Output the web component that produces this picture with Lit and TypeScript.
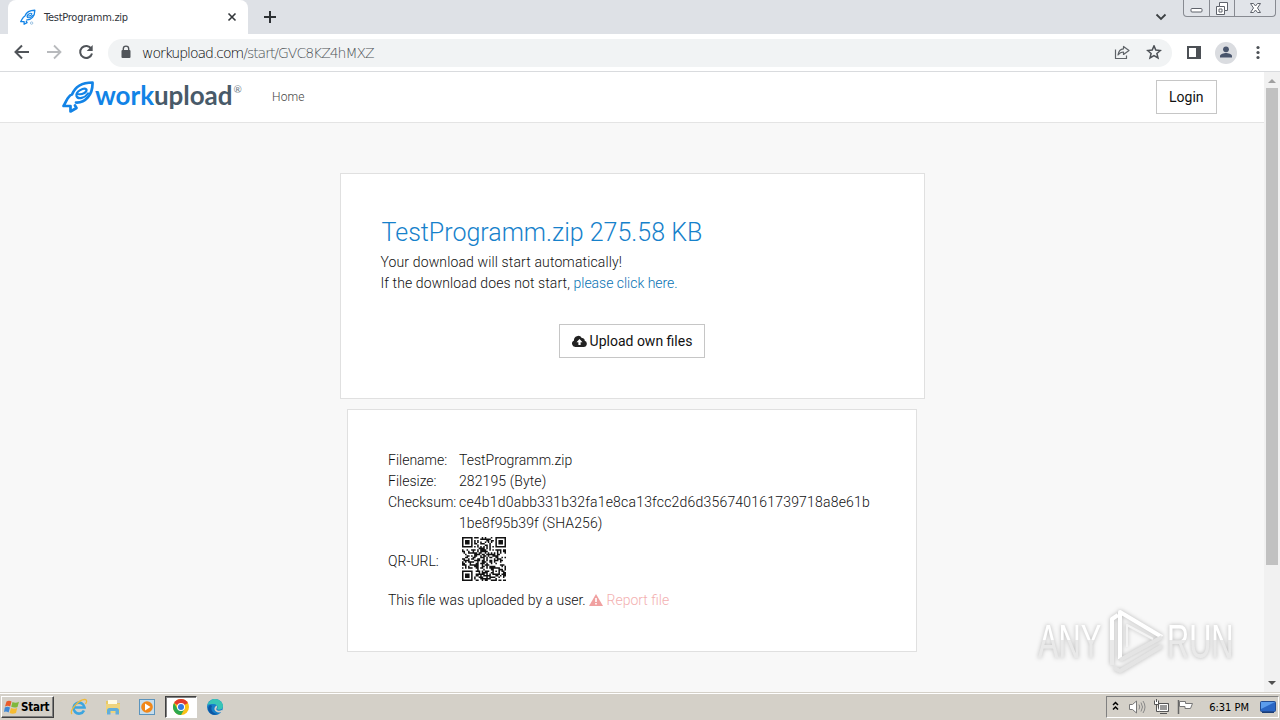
import { LitElement, html, svg, css } from "lit";
import { customElement } from "lit/decorators.js";

const QR_SIZE = 29;

function finder(x: number, y: number): boolean | null {
  const origins = [
    [0, 0],
    [QR_SIZE - 7, 0],
    [0, QR_SIZE - 7],
  ];
  for (const [ox, oy] of origins) {
    const dx = x - ox;
    const dy = y - oy;
    if (dx >= -1 && dx <= 7 && dy >= -1 && dy <= 7) {
      const ring = Math.max(Math.abs(dx - 3), Math.abs(dy - 3));
      return ring !== 2 && ring !== 4;
    }
  }
  return null;
}

function qrPath(): string {
  let d = "";
  let seed = 4211;
  for (let y = 0; y < QR_SIZE; y++) {
    for (let x = 0; x < QR_SIZE; x++) {
      seed = (seed * 1103515245 + 12345) % 2147483648;
      let dark = finder(x, y);
      if (dark === null) {
        const ring = Math.max(Math.abs(x - 22), Math.abs(y - 22));
        if (ring <= 2) dark = ring !== 1;
        else if (x === 6 || y === 6) dark = (x + y) % 2 === 0;
        else dark = seed / 2147483648 < 0.52;
      }
      if (dark) d += `M${x} ${y}h1v1h-1z`;
    }
  }
  return d;
}

const rocket = svg`
  <g fill="none" stroke="#1283e6" stroke-width="2.7" stroke-linejoin="round" stroke-linecap="round">
    <path d="M14 21.500C23 22 31 14 30.500 1.500C20 1.500 13 6 10 13.500C6 14.500 5 19 1.500 25H8.500V30.500L14.500 27L13 24.500"/>
    <path d="M16 13C20 14 25 11.500 24.500 8.500C22 6 13.500 10.500 14.500 15C16 19 23 17 26 12.500" stroke-width="2.200"/>
  </g>`;

@customElement("browser-chrome")
export class BrowserChrome extends LitElement {
  static override styles = css`
    :host {
      display: block;
      font-family: "DejaVu Sans Condensed", "DejaVu Sans", sans-serif;
      font-stretch: condensed;
      color: #3c4043;
    }
    svg {
      display: block;
      flex: none;
    }
    .tabs {
      height: 34px;
      background: #dee1e6;
      display: flex;
    }
    .tab {
      width: 240px;
      height: 34px;
      margin-left: 8px;
      padding: 0 10px 0 12px;
      box-sizing: border-box;
      border-radius: 8px 8px 0 0;
      background: #fff;
      display: flex;
      align-items: center;
    }
    .title {
      margin-left: 8px;
      flex: 1;
      font-size: 11px;
      letter-spacing: -0.26px;
      color: #30343a;
      white-space: nowrap;
    }
    .new {
      margin: 10px 0 0 15px;
    }
    .chevron {
      margin: 13px 16px 0 auto;
    }
    .window {
      width: 91px;
      height: 16px;
      border: 1px solid #878a91;
      border-top: 0;
      border-radius: 0 0 4px 4px;
      display: grid;
      grid-template-columns: 25px 25px 1fr;
      margin-right: 4px;
      background: #e1e4e9;
    }
    .window div {
      display: flex;
      align-items: center;
      justify-content: center;
    }
    .window div + div {
      border-left: 1px solid #878a91;
    }
    .toolbar {
      height: 37px;
      background: #fff;
      border-bottom: 1px solid #d9dbde;
      display: flex;
      align-items: center;
      padding: 0 14px 0 14px;
    }
    .nav {
      display: flex;
      gap: 16px;
      margin-top: -1px;
    }
    .address {
      flex: 1;
      height: 28px;
      margin: 0 14px 0 14px;
      padding: 0 10px 0 10px;
      border-radius: 14px;
      background: #f1f3f4;
      display: flex;
      align-items: center;
    }
    .url {
      flex: 1;
      margin-left: 8px;
      font-family: "DejaVu Sans", sans-serif;
      font-stretch: normal;
      font-size: 14px;
      font-weight: 200;
      white-space: nowrap;
      letter-spacing: -1.03px;
      color: #4f5358;
    }
    .host {
      color: #000;
      letter-spacing: -1.02px;
    }
    .tools {
      display: flex;
      gap: 16px;
    }
    .right {
      display: flex;
      align-items: center;
      gap: 13px;
    }
  `;

  override render() {
    return html`<div class="tabs">
        <div class="tab">
          <svg width="16" height="17" viewBox="0 0 33 33">${rocket}
            <circle cx="24" cy="28" r="2.500" fill="none" stroke="#79aed8" stroke-width="1.500" />
          </svg>
          <span class="title">TestProgramm.zip</span>
          <svg width="12" height="12" viewBox="0 0 12 12">
            <path d="M2.500 2.500l7 7M9.500 2.500l-7 7" stroke="#33373b" stroke-width="1.600" />
          </svg>
        </div>
        <svg class="new" width="14" height="14" viewBox="0 0 14 14">
          <path d="M7 1v12M1 7h12" stroke="#2d3034" stroke-width="2" />
        </svg>
        <svg class="chevron" width="12" height="8" viewBox="0 0 12 8">
          <path d="M1.500 1.500L6 6l4.500-4.500" fill="none" stroke="#3c4043" stroke-width="1.800" />
        </svg>
        <div class="window">
          <div>
            <svg width="13" height="16" viewBox="0 0 13 16">
              <rect x="1" y="8.500" width="11" height="3.500" rx="1" fill="#fff" stroke="#5e626b" />
            </svg>
          </div>
          <div>
            <svg width="14" height="16" viewBox="0 0 14 16">
              <path d="M4.500 2.500h8v8h-3v4h-8v-8h3z" fill="#fff" stroke="#5e626b" />
              <path d="M4.500 6.500h5v4M4 9h3v3H4z" fill="none" stroke="#5e626b" />
            </svg>
          </div>
          <div>
            <svg width="13" height="16" viewBox="0 0 13 16">
              <path
                d="M1.500 3.500h3L6.500 6l2-2.500h3L8.500 8l3 4.500h-3L6.500 10l-2 2.500h-3l3-4.500z"
                fill="#fff"
                stroke="#5e626b"
              />
            </svg>
          </div>
        </div>
      </div>
      <div class="toolbar">
        <div class="nav">
          <svg width="16" height="16" viewBox="0 0 16 16">
            <path d="M15 8H2M8 1.500L1.500 8L8 14.500" fill="none" stroke="#505459" stroke-width="2" />
          </svg>
          <svg width="16" height="16" viewBox="0 0 16 16">
            <path d="M1 8h13M8 1.500L14.500 8L8 14.500" fill="none" stroke="#b8babd" stroke-width="1.800" />
          </svg>
          <svg width="16" height="16" viewBox="0 0 16 16">
            <path d="M13.300 4.800A6 6 0 1 0 14 9.500" fill="none" stroke="#505459" stroke-width="2" />
            <path d="M14.700 1v6H8.700z" fill="#505459" />
          </svg>
        </div>
        <div class="address">
          <svg width="16" height="16" viewBox="0 0 16 16">
            <rect x="3.500" y="5" width="9" height="8" rx="1" fill="#505459" />
            <path d="M5.300 5V3.800a2.700 2.700 0 0 1 5.400 0V5" fill="none" stroke="#505459" stroke-width="1.400" />
          </svg>
          <span class="url"><span class="host">workupload.com</span>/start/GVC8KZ4hMXZ</span>
          <div class="tools">
            <svg width="16" height="16" viewBox="0 0 16 16">
              <path
                d="M1.500 4.500v9h11v-3M9.500 1.500v2.300C6 4 4.500 6.500 4 10c1.500-2 3-3 5.500-3v2.500L15 5.500z"
                fill="none"
                stroke="#5f6368"
                stroke-width="1.200"
                stroke-linejoin="round"
              />
            </svg>
            <svg width="16" height="16" viewBox="0 0 16 16">
              <path
                d="M8 .9l1.800 4.200 4.600.4-3.500 3 1.100 4.500L8 10.600l-4 2.400 1.100-4.500-3.500-3 4.600-.4z"
                fill="none"
                stroke="#4c5055"
                stroke-width="1.500"
              />
            </svg>
          </div>
        </div>
        <div class="right">
          <svg width="16" height="16" viewBox="0 0 16 16">
            <path d="M1 1h14v13H1zM3 3v9h7V3z" fill="#4c5055" fill-rule="evenodd" />
          </svg>
          <svg width="22" height="22" viewBox="0 0 22 22">
            <circle cx="11" cy="11" r="11" fill="#dadce0" />
            <circle cx="11" cy="7.300" r="2.900" fill="#49556c" />
            <path d="M5 15.500V14c0-2 4-3 6-3s6 1 6 3v1.500z" fill="#49556c" />
          </svg>
          <svg width="16" height="16" viewBox="0 0 16 16" fill="#4c5055">
            <circle cx="8" cy="2.500" r="1.600" />
            <circle cx="8" cy="7.500" r="1.600" />
            <circle cx="8" cy="12.500" r="1.600" />
          </svg>
        </div>
      </div>`;
  }
}

@customElement("download-page")
export class DownloadPage extends LitElement {
  static override styles = css`
    :host {
      display: flex;
      position: relative;
      min-height: 0;
      background: #f8f8f8;
      font-family: Roboto, "Liberation Sans", sans-serif;
      font-weight: 300;
      font-size: 14px;
      line-height: 21px;
      color: #111;
    }
    .page {
      flex: 1;
      overflow: hidden;
    }
    .header {
      height: 50px;
      background: #fff;
      border-bottom: 1px solid #e4e4e4;
      display: flex;
      align-items: center;
      padding: 0 47px 0 62px;
    }
    .brand {
      display: flex;
      align-items: center;
      width: 182px;
      height: 36px;
      font-family: Lato, sans-serif;
      font-weight: 700;
      font-size: 26px;
      line-height: 32px;
      color: #485a69;
      letter-spacing: -0.05px;
    }
    .brand span {
      margin-bottom: 4px;
    }
    .rocket {
      flex: none;
    }
    .brand .work {
      color: #1283e6;
    }
    .brand .reg {
      margin: 0 0 17px 1px;
      font-size: 10px;
      line-height: 12px;
      font-weight: 400;
      color: #6d7b87;
    }
    .home {
      margin-left: 28px;
      font-size: 12px;
      color: #444;
      letter-spacing: 0.15px;
    }
    .btn {
      height: 34px;
      box-sizing: border-box;
      border: 1px solid #c6c6c6;
      background: #fff;
      padding: 0 12px;
      display: inline-flex;
      align-items: center;
      font-weight: 400;
      white-space: nowrap;
    }
    .login {
      margin-left: auto;
      width: 61px;
    }
    .card {
      box-sizing: border-box;
      background: #fff;
      border: 1px solid #e0e0e0;
      margin: 0 auto;
    }
    .download {
      width: 585px;
      height: 226px;
      margin-top: 50px;
      padding: 40px;
    }
    h1 {
      margin: 4px 0 5px;
      font-size: 25px;
      line-height: 29px;
      font-weight: 300;
      color: #1681cb;
      white-space: nowrap;
      padding-left: 1px;
    }
    p {
      margin: 0;
    }
    .spaced {
      letter-spacing: 0.13px;
    }
    .note {
      letter-spacing: 0.1px;
    }
    a {
      color: #0872b3;
    }
    .note a {
      letter-spacing: -0.02px;
    }
    .center {
      margin-top: 30px;
      display: flex;
      justify-content: center;
    }
    .cloud {
      margin-right: 3px;
    }
    .info {
      width: 570px;
      height: 243px;
      margin-top: 10px;
      padding: 40px;
    }
    .rows {
      display: grid;
      grid-template-columns: 71px 1fr;
      align-items: center;
    }
    .rows span {
      white-space: nowrap;
    }
    .hash {
      letter-spacing: 0.2px;
    }
    .hashend {
      letter-spacing: 0.1px;
    }
    .tall {
      align-self: start;
    }
    .rows .qr-label {
      padding-bottom: 2px;
    }
    .qr {
      display: block;
      margin: 3px 0 9px 3px;
    }
    .report {
      color: #f3b0b0;
    }
    .warn {
      vertical-align: -1px;
    }
    .scroll {
      width: 16px;
      background: #f1f1f1;
      display: flex;
      flex-direction: column;
      align-items: center;
    }
    .thumb {
      width: 12px;
      height: 477px;
      background: #c1c1c1;
    }
    .down {
      margin-top: auto;
    }
    .watermark {
      position: absolute;
      left: 1030px;
      top: 531px;
      filter: drop-shadow(0 0 2px rgba(0, 0, 0, 0.26));
    }
    .watermark text {
      font-family: "Liberation Sans", sans-serif;
      font-size: 48px;
    }
  `;

  override render() {
    return html`<div class="page">
        <div class="header">
          <div class="brand">
            <svg class="rocket" width="33" height="33" viewBox="0 0 33 33">${rocket}</svg>
            <span class="work">work</span><span>upload</span><span class="reg">®</span>
          </div>
          <span class="home">Home</span>
          <span class="btn login">Login</span>
        </div>
        <div class="card download">
          <h1>TestProgramm.zip 275.58 KB</h1>
          <p class="spaced">Your download will start automatically!</p>
          <p class="note">If the download does not start, <a>please click here.</a></p>
          <div class="center">
            <span class="btn">
              <svg class="cloud" width="15" height="13" viewBox="0 0 15 13">
                <path
                  d="M3.500 12A3.400 3.400 0 0 1 2 5.500A4.200 4.200 0 0 1 9.800 3A2.500 2.500 0 0 1 12.700 5.800A3.200 3.200 0 0 1 12 12z"
                  fill="#222"
                />
                <path d="M7.500 4l3 3.200H8.600V10H6.400V7.200H4.500z" fill="#fff" />
              </svg>
              Upload own files
            </span>
          </div>
        </div>
        <div class="card info">
          <div class="rows">
            <span>Filename:</span><span>TestProgramm.zip</span>
            <span>Filesize:</span><span class="hashend">282195 (Byte)</span>
            <span class="tall">Checksum:</span>
            <span
              ><span class="hash">ce4b1d0abb331b32fa1e8ca13fcc2d6d356740161739718a8e61b</span><br /><span
                class="hashend"
                >1be8f95b39f (SHA256)</span
              ></span
            >
            <span class="qr-label">QR-URL:</span>
            <svg class="qr" width="44" height="44" viewBox="0 0 29 29">
              <path d=${qrPath()} fill="#111" />
            </svg>
          </div>
          <p>
            This file was uploaded by a user.
            <a class="report"
              ><svg class="warn" width="14" height="12" viewBox="0 0 14 12">
                <path d="M7 0l7 12H0z" fill="#f0a0a0" />
                <path d="M7 4v4M7 9v1.500" stroke="#fff" stroke-width="1.600" />
              </svg>
              Report file</a
            >
          </p>
        </div>
      </div>
      <div class="scroll">
        <svg width="16" height="16" viewBox="0 0 16 16"><path d="M4 11l4-4 4 4z" fill="#a0a0a0" /></svg>
        <div class="thumb"></div>
        <svg class="down" width="16" height="17" viewBox="0 0 16 17"><path d="M4 6h8l-4 4z" fill="#505050" /></svg>
      </div>
      <svg class="watermark" width="210" height="76" viewBox="0 0 210 76">
        <defs>
          <linearGradient id="fade" gradientUnits="userSpaceOnUse" x1="0" y1="19" x2="0" y2="56">
            <stop offset="0.500" stop-color="#fff" />
            <stop offset="0.500" stop-color="#e9e9e9" />
          </linearGradient>
        </defs>
        <g fill="url(#fade)">
          <text transform="translate(8 0) scale(0.64 1)" y="55">ANY</text>
          <text transform="translate(137 0) scale(0.64 1)" y="55">RUN</text>
        </g>
        <g fill="none" stroke-width="4" stroke-linejoin="round">
          <path d="M82 62V16L88 12" stroke="url(#fade)" />
          <path d="M90 56V9L132 34" stroke="#fff" />
          <path d="M90 57L132 34M84 65L90 68L132 43" stroke="#e4e4e4" />
          <path d="M97 44V22L123 36" stroke="#f4f4f4" stroke-width="2" />
        </g>
      </svg>`;
  }
}

@customElement("task-bar")
export class TaskBar extends LitElement {
  static override styles = css`
    :host {
      height: 28px;
      box-sizing: border-box;
      background: #d4d0c8;
      border-top: 1px solid #d4d0c8;
      box-shadow: inset 0 1px #fff;
      display: flex;
      align-items: center;
      padding: 1px 1px 0 1px;
      font-family: "DejaVu Sans Condensed", "DejaVu Sans", sans-serif;
      font-stretch: condensed;
      font-size: 11px;
      color: #000;
    }
    svg {
      display: block;
      flex: none;
    }
    .start {
      width: 53px;
      height: 22px;
      box-sizing: border-box;
      border: 1px solid;
      border-color: #fff #404040 #404040 #fff;
      box-shadow: inset -1px -1px #808080;
      display: flex;
      align-items: center;
      padding-left: 2px;
      gap: 1px;
      font-weight: bold;
      font-size: 11.5px;
      letter-spacing: -0.25px;
    }
    .apps {
      margin-left: 9px;
      display: flex;
      align-items: center;
      gap: 2px;
    }
    .app {
      width: 32px;
      height: 22px;
      box-sizing: border-box;
      display: flex;
      align-items: center;
      justify-content: center;
    }
    .active {
      background: #fff;
      border: 1px solid;
      border-color: #404040 #fff #fff #404040;
      box-shadow: inset 1px 1px #808080;
    }
    .tray {
      margin-left: auto;
      width: 173px;
      height: 22px;
      box-sizing: border-box;
      border: 1px solid;
      border-color: #808080 #fff #fff #808080;
      display: flex;
      align-items: center;
      padding: 0 2px 0 5px;
    }
    .sound {
      margin-left: 9px;
    }
    .net,
    .flag {
      margin-left: 7px;
    }
    .time {
      margin-left: auto;
      margin-right: 11px;
      white-space: nowrap;
    }
  `;

  override render() {
    return html`<div class="start">
        <svg width="16" height="16" viewBox="0 0 16 16">
          <path d="M2.500 2.500Q5 .8 7.500 2.500L6.200 7.500Q3.700 6 1 7.500z" fill="#e95c2b" />
          <path d="M8.500 3Q11.500 4.500 15 2.800L13.500 8Q10.500 9.300 7.200 7.800z" fill="#7fb83d" />
          <path d="M.8 8.500Q3.500 7 6 8.500L4.600 13.500Q2 12 0 13z" fill="#3f88d5" />
          <path d="M7 9Q10 10.300 13.200 9L12 14Q8.500 15.500 5.600 14z" fill="#f6bc32" />
        </svg>
        Start
      </div>
      <div class="apps">
        <div class="app">
          <svg width="18" height="18" viewBox="0 0 18 18">
            <path d="M14 12.500A5.500 5.500 0 1 1 14.500 9.500H5" fill="none" stroke="#3ca5df" stroke-width="2.600" />
            <path d="M2 16C-1 13 9 1 15 1.500C18 2 16 5 15.500 6" fill="none" stroke="#efba3b" stroke-width="1.300" />
          </svg>
        </div>
        <div class="app">
          <svg width="18" height="18" viewBox="0 0 18 18">
            <path d="M2 3h5l1 2h8v9H2z" fill="#e8c964" />
            <path d="M4 2h9v5H4z" fill="#fffbe5" />
            <path d="M2 6h14v9H2z" fill="#efd47c" />
            <path d="M3 16.500v-4q0-2.500 2.500-2.500h7q2.500 0 2.500 2.500v4h-3.500V13h-5v3.500z" fill="#62aedb" />
          </svg>
        </div>
        <div class="app">
          <svg width="16" height="16" viewBox="0 0 16 16">
            <rect x=".5" y=".5" width="15" height="15" fill="#c6ddec" stroke="#5b94bd" />
            <circle cx="8" cy="8" r="5.800" fill="#f18718" />
            <path d="M6 4.500v7l5.500-3.500z" fill="#fff" />
          </svg>
        </div>
        <div class="app active">
          <svg width="16" height="16" viewBox="0 0 16 16">
            <circle cx="8" cy="8" r="8" fill="#fbc116" />
            <path d="M8 8L1.070 4A8 8 0 0 1 14.930 4z" fill="#e33b2e" />
            <path d="M1.070 4A8 8 0 0 0 8 16L11.500 10L4.500 10z" fill="#2da94f" />
            <circle cx="8" cy="8" r="4" fill="#fff" />
            <circle cx="8" cy="8" r="3" fill="#3279e2" />
          </svg>
        </div>
        <div class="app">
          <svg width="16" height="16" viewBox="0 0 16 16">
            <circle cx="8" cy="8" r="8" fill="#167fc9" />
            <path d="M.5 6C2 1 6 0 8 0c5 0 8 4 8 7 0 4-5 4.500-6 3 2-3-1-5-4-5C4 5 2 5 .5 6z" fill="#38c5b6" />
            <path d="M5 7c-2 4 1 8 6 8-7 3-12-4-9-8 1-1.500 2-1 3 0z" fill="#0d57a3" />
            <path d="M9.500 6.500c1.500 1.500-.5 3-.2 4 1 1.700 4 1.500 5.700.5L16 13l-4 .5C7 13 6 9 9.500 6.500z" fill="#d4d0c8" />
          </svg>
        </div>
      </div>
      <div class="tray">
        <svg width="7" height="12" viewBox="0 0 7 12">
          <path d="M1 4l2.500-2.500L6 4M1 8.500L3.500 6 6 8.500" fill="none" stroke="#000" stroke-width="1.500" />
        </svg>
        <svg class="sound" width="18" height="16" viewBox="0 0 18 16">
          <path d="M1.500 5.500h3L8.500 2v12l-4-3.500h-3z" fill="#fff" stroke="#777" />
          <path d="M11 5.500q1.500 2.500 0 5M13 3.500q3 4.500 0 9M15 2q4 6 0 12" fill="none" stroke="#888" />
        </svg>
        <svg class="net" width="17" height="16" viewBox="0 0 17 16">
          <path d="M5.500 4.500h10v8h-10zM7 14.500h7" fill="#999" stroke="#555" />
          <path d="M6.500 5.500h8v6h-8z" fill="none" stroke="#fff" />
          <path d="M1.500 1.500v4h4v-4M3.500 0v3M3.500 5.500v7h3" fill="#fff" stroke="#555" />
        </svg>
        <svg class="flag" width="17" height="16" viewBox="0 0 17 16">
          <path d="M1.500 1v14" stroke="#666" stroke-width="1.500" />
          <path d="M2.500 2.500h6v2h7l-2 5H8v-2H2.500z" fill="#fff" stroke="#777" />
        </svg>
        <span class="time">6:31 PM</span>
        <svg width="16" height="14" viewBox="0 0 16 14">
          <rect x=".5" y="1.500" width="15" height="10" rx="1" fill="#2a66c4" stroke="#234c91" />
          <path d="M1 2h14L1 9z" fill="#5b9cec" />
          <path d="M2 12.500h12" stroke="#1b3e77" />
        </svg>
      </div>`;
  }
}

@customElement("app-root")
export class AppRoot extends LitElement {
  static override styles = css`
    :host {
      display: grid;
      grid-template-rows: 72px 1fr 28px;
      width: 1280px;
      height: 720px;
      overflow: hidden;
    }
  `;

  override render() {
    return html`<browser-chrome></browser-chrome>
      <download-page></download-page>
      <task-bar></task-bar>`;
  }
}
